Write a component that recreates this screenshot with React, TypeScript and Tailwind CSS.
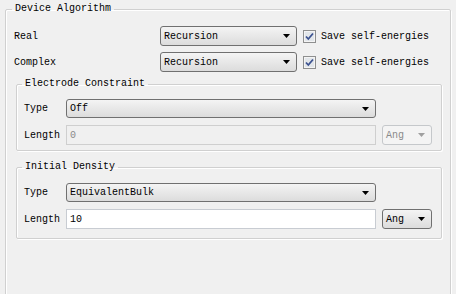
const Arrow = ({ disabled }: { disabled?: boolean }) => (
  <svg width="7" height="4" viewBox="0 0 7 4" className="shrink-0">
    <path d="M0 0H7L3.5 4Z" fill={disabled ? '#a0a0a0' : '#000'} />
  </svg>
)

const Combo = ({ value, className, disabled }: { value: string; className: string; disabled?: boolean }) => (
  <div
    className={`flex items-center justify-between rounded-[3px] border pl-[3px] pr-[6px] ${
      disabled
        ? 'border-[#c5c8cb] bg-[#f4f4f4] text-[#8a8a8a]'
        : 'border-[#707070] bg-gradient-to-b from-[#f4f4f4] to-[#dcdcdc] text-black'
    } ${className}`}
  >
    <span>{value}</span>
    <Arrow disabled={disabled} />
  </div>
)

const Input = ({ value, className, disabled }: { value: string; className: string; disabled?: boolean }) => (
  <div
    className={`flex items-center border pl-[3px] ${
      disabled ? 'border-[#cfcfcf] bg-[#f0f0f0] text-[#8a8a8a]' : 'border-[#c8ccd2] bg-white text-black'
    } ${className}`}
  >
    {value}
  </div>
)

const Check = () => (
  <svg width="13" height="13" viewBox="0 0 13 13" className="shrink-0">
    <rect x="0.5" y="0.5" width="12" height="12" fill="#f4f4f4" stroke="#8e8f8f" />
    <rect x="2" y="2" width="9" height="9" fill="#e2e6ea" />
    <path d="M3 6.5L5.3 9L10 3.5" fill="none" stroke="#3c5290" strokeWidth="1.8" />
  </svg>
)

const Group = ({ title, className, children }: { title: string; className: string; children: React.ReactNode }) => (
  <fieldset
    className={`rounded-[2px] border border-[#d0d0d0] shadow-[inset_1px_1px_0_#ffffff,1px_1px_0_#ffffff] ${className}`}
  >
    <legend className="ml-[-2px] px-[3px] leading-[14px]">{title}</legend>
    {children}
  </fieldset>
)

export default function App() {
  return (
    <div className="h-[294px] w-[456px] overflow-hidden bg-[#f0f0f0] pt-[2px] pl-[5px] text-[10px] text-black [font-family:'Liberation_Mono',monospace]">
      <Group title="Device Algorithm" className="h-[320px] w-[446px] pl-[8px] pr-[8px] pt-[10px]">
        <div className="flex flex-col gap-[6px]">
          <div className="flex h-[20px] items-center">
            <span className="w-[146px]">Real</span>
            <Combo value="Recursion" className="h-[20px] w-[137px]" />
            <div className="ml-[6px] flex items-center gap-[5px]">
              <Check />
              <span>Save self-energies</span>
            </div>
          </div>
          <div className="flex h-[20px] items-center">
            <span className="w-[146px]">Complex</span>
            <Combo value="Recursion" className="h-[20px] w-[137px]" />
            <div className="ml-[6px] flex items-center gap-[5px]">
              <Check />
              <span>Save self-energies</span>
            </div>
          </div>
        </div>

        <Group title="Electrode Constraint" className="mt-[5px] ml-[2px] w-[426px] pl-[7px] pr-[8px] pt-[8px] pb-[5px]">
          <div className="flex flex-col gap-[7px]">
            <div className="flex h-[19px] items-center">
              <span className="w-[42px]">Type</span>
              <Combo value="Off" className="h-[19px] w-[310px]" />
            </div>
            <div className="flex h-[20px] items-center">
              <span className="w-[42px]">Length</span>
              <Input value="0" disabled className="h-[20px] w-[310px]" />
              <Combo value="Ang" disabled className="ml-[6px] h-[20px] w-[50px]" />
            </div>
          </div>
        </Group>

        <Group title="Initial Density" className="mt-[9px] ml-[2px] w-[426px] pl-[7px] pr-[8px] pt-[9px] pb-[9px]">
          <div className="flex flex-col gap-[7px]">
            <div className="flex h-[19px] items-center">
              <span className="w-[42px]">Type</span>
              <Combo value="EquivalentBulk" className="h-[19px] w-[310px]" />
            </div>
            <div className="flex h-[20px] items-center">
              <span className="w-[42px]">Length</span>
              <Input value="10" className="h-[20px] w-[310px]" />
              <Combo value="Ang" className="ml-[6px] h-[20px] w-[50px]" />
            </div>
          </div>
        </Group>
      </Group>
    </div>
  )
}
